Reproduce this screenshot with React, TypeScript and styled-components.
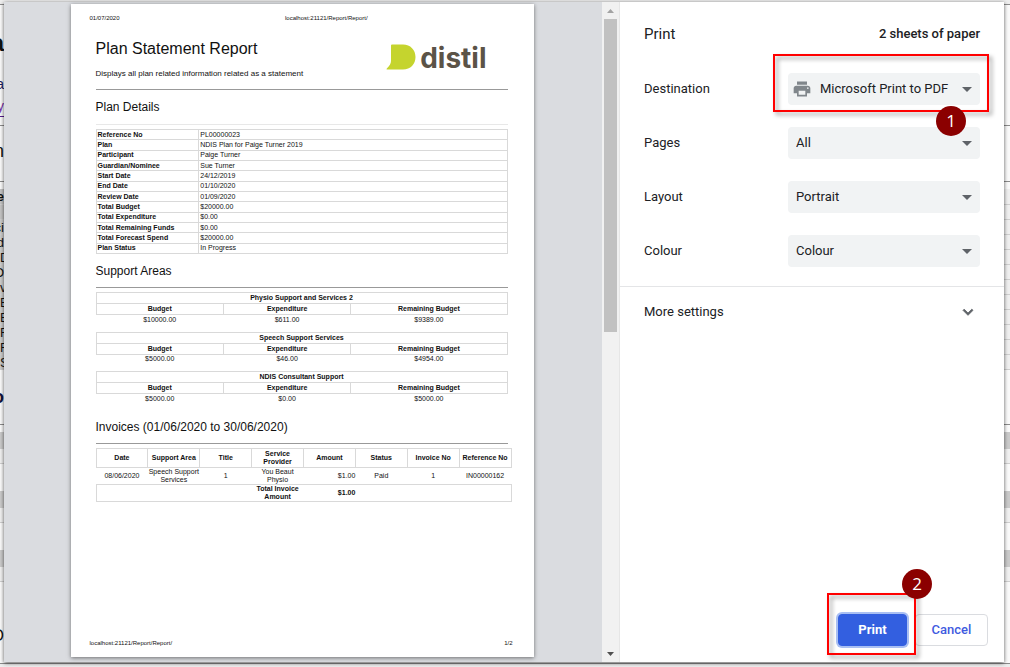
import React from 'react';
import styled, { createGlobalStyle, css } from 'styled-components';

const GlobalStyle = createGlobalStyle`
  *, *::before, *::after { box-sizing: border-box; }
  body {
    margin: 0;
    background: #fbfbfb;
    color: #202124;
    font-family: Roboto, "Liberation Sans", sans-serif;
    font-size: 13px;
  }
`;

const Stage = styled.div`
  display: grid;
  grid-template-columns: minmax(0, 1fr);
  min-height: 100vh;
`;

/* ---------- page behind the dialog ---------- */

const Backdrop = styled.div`
  grid-area: 1 / 1;
  display: flex;
  flex-direction: column;
  overflow: hidden;
  font-family: "Liberation Sans", Arial, sans-serif;
`;

const BackRow = styled.div<{ $h: number; $bg?: string; $line?: string }>`
  display: flex;
  flex: none;
  height: ${(p) => p.$h}px;
  background: ${(p) => p.$bg ?? 'transparent'};
  border-bottom: ${(p) => (p.$line ? `1px solid ${p.$line}` : 'none')};
`;

const BackCell = styled.div<{
  $size: number; $color: string; $bold?: boolean; $bg?: string; $link?: boolean; $start?: boolean;
}>`
  display: flex;
  align-items: center;
  justify-content: ${(p) => (p.$start ? 'flex-start' : 'flex-end')};
  width: 4px;
  overflow: hidden;
  background: ${(p) => p.$bg ?? 'transparent'};
  color: ${(p) => p.$color};
  font-size: ${(p) => p.$size}px;
  font-weight: ${(p) => (p.$bold ? 700 : 400)};
  border-bottom: ${(p) => (p.$link ? '1px solid #551a8b' : 'none')};
`;

type Back = {
  h: number;
  bg?: string;
  line?: string;
  text?: string;
  size?: number;
  color?: string;
  bold?: boolean;
  cell?: string;
  link?: boolean;
  start?: boolean;
};

const tableRows: Back[] = ['ci', 'd', 'D', 'O', 'v', 'E', 'E', 'F', 'F', 'S'].map((text) => ({
  h: 15,
  bg: '#f0f0f0',
  line: '#cfcfcf',
  text,
  size: 13,
  cell: '#cccccb',
  start: 'DEFSv'.includes(text),
}));

const band: Back[] = [
  { h: 17, bg: '#cbcbcb' },
  { h: 15, bg: '#f1f1f1', line: '#cfcfcf' },
];

const backRows: Back[] = [
  { h: 5, bg: '#eeeeee', line: '#8c8c8c' },
  { h: 11 },
  { h: 54, text: 'a', size: 24, bold: true },
  { h: 2 },
  { h: 24, text: 'a', size: 14, color: '#1a1a5e' },
  { h: 21, text: 'y', size: 14, color: '#7a2fa8', link: true },
  { h: 9, line: '#8c8c8c' },
  { h: 50, text: 'n', size: 18 },
  { h: 6, line: '#8c8c8c' },
  { h: 7 },
  { h: 16, bg: '#f0f0f0', line: '#cfcfcf', text: 'e', size: 13, bold: true, cell: '#c4c4c4' },
  { h: 15, bg: '#f0f0f0', line: '#cfcfcf', text: '', cell: '#c4c4c4' },
  ...tableRows,
  { h: 54, text: 'o', size: 18, bold: true, color: '#14143c' },
  { h: 1, bg: '#8c8c8c' },
  { h: 7 },
  ...band,
  { h: 27 },
  ...band,
  { h: 27 },
  ...band,
  { h: 40 },
  { h: 28, text: 'O', size: 16 },
  { h: 14, line: '#8c8c8c' },
  { h: 3, bg: '#eeeeee' },
];

/* ---------- dialog ---------- */

const Dialog = styled.main`
  grid-area: 1 / 1;
  display: flex;
  margin: 2px 6px 5px 4px;
  background: #fff;
  box-shadow: 0 1px 4px rgba(0, 0, 0, 0.65);
  z-index: 1;
`;

const Preview = styled.section`
  flex: 1;
  min-width: 0;
  display: flex;
  justify-content: center;
  padding: 2px 2px 5px 0;
  background: #dadce0;
`;

const Scrollbar = styled.div`
  display: flex;
  flex-direction: column;
  align-items: center;
  width: 18px;
  background: #f1f1f1;
  border-right: 1px solid #e6e6e6;
`;

const ScrollButton = styled.button`
  display: flex;
  align-items: center;
  justify-content: center;
  width: 17px;
  height: 17px;
  padding: 0;
  border: 0;
  background: transparent;
`;

const ScrollTrack = styled.div`
  flex: 1;
  width: 13px;
`;

const ScrollThumb = styled.div`
  height: 50%;
  background: #c1c1c1;
`;

/* ---------- report page ---------- */

const Paper = styled.article`
  display: flex;
  flex-direction: column;
  flex: 0 1 463px;
  min-width: 0;
  padding: 10px 19px;
  background: #fff;
  color: #111;
  box-shadow: 0 1px 4px rgba(0, 0, 0, 0.5);
  font-family: "Liberation Sans", Arial, sans-serif;
  font-size: 7px;
  line-height: 8px;
`;

const PageHeader = styled.header`
  display: grid;
  grid-template-columns: 46% auto;
  font-size: 6px;
`;

const PageFooter = styled.footer`
  display: flex;
  justify-content: space-between;
  margin-top: auto;
  padding-right: 2px;
  font-size: 6px;
`;

const Report = styled.div`
  padding: 15px 7px 0 6px;
`;

const Intro = styled.div`
  display: flex;
  justify-content: space-between;
  height: 53px;
  padding-top: 1px;
  border-bottom: 1px solid #999;
`;

const Title = styled.h1`
  margin: 0 0 10px;
  font-size: 16px;
  line-height: 22px;
  font-weight: 400;
`;

const Description = styled.p`
  margin: 0;
  font-size: 8px;
  line-height: 8px;
`;

const Logo = styled.div`
  display: flex;
  align-items: flex-start;
  gap: 4px;
  padding: 6px 21px 0 0;
  color: #5b5347;
  font-family: Inter, sans-serif;
  font-size: 28px;
  line-height: 28px;
  font-weight: 700;
`;

const SectionTitle = styled.h2<{ $light?: boolean; $top: number }>`
  margin: 0 0 4px;
  padding: ${(p) => p.$top}px 0 ${(p) => (p.$light ? 9 : 8)}px;
  border-bottom: 1px solid ${(p) => (p.$light ? '#e8e8e8' : '#999')};
  font-size: 12px;
  line-height: 16px;
  font-weight: 400;
`;

const tableBase = css`
  border-collapse: collapse;
  table-layout: fixed;
  th, td { padding: 0; }
  th { font-weight: 700; }
`;

const DetailsTable = styled.table`
  ${tableBase}
  width: 100%;
  height: 125px;
  text-align: left;
  th, td { border: 1px solid #d9d9d9; padding-left: 1px; }
  th { width: 25%; }
`;

const SupportTable = styled.table`
  ${tableBase}
  width: 100%;
  margin-bottom: 7px;
  text-align: center;
  th { height: 11px; border: 1px solid #d9d9d9; }
  td { height: 10px; }
`;

const InvoiceTable = styled.table`
  ${tableBase}
  width: calc(100% + 4px);
  text-align: center;
  th { height: 19px; border: 1px solid #d9d9d9; }
  td { height: 17px; }
  tfoot tr { border: 1px solid #d9d9d9; font-weight: 700; }
`;

const AmountCell = styled.td`
  text-align: right;
`;

/* ---------- settings ---------- */

const Settings = styled.aside`
  display: flex;
  flex-direction: column;
  flex: none;
  width: 384px;
`;

const SettingsHeader = styled.header`
  display: flex;
  align-items: center;
  justify-content: space-between;
  height: 64px;
  padding: 0 24px;
`;

const Heading = styled.h2`
  margin: 0;
  font-size: 15px;
  font-weight: 400;
`;

const Sheets = styled.span`
  padding-bottom: 2px;
  font-weight: 500;
`;

const Fields = styled.div`
  display: flex;
  flex-direction: column;
  gap: 22px;
  padding: 7px 24px 19px;
  border-bottom: 1px solid #e4e5e7;
`;

const Field = styled.div`
  display: flex;
  align-items: center;
  justify-content: space-between;
`;

const FieldLabel = styled.label`
  padding-bottom: 2px;
`;

const SelectBox = styled.div`
  position: relative;
  display: grid;
  align-items: center;
  width: 192px;
  > * { grid-area: 1 / 1; }
`;

const Select = styled.select<{ $icon?: boolean }>`
  width: 100%;
  height: 32px;
  padding: 0 28px 2px ${(p) => (p.$icon ? 32 : 8)}px;
  appearance: none;
  border: 0;
  border-radius: 4px;
  background: #f1f3f4;
  color: #202124;
  font: inherit;
`;

const Caret = styled.svg`
  justify-self: end;
  margin-right: 8px;
  pointer-events: none;
`;

const PrinterIcon = styled.svg`
  margin-left: 4px;
  pointer-events: none;
`;

const More = styled.button`
  display: flex;
  align-items: center;
  justify-content: space-between;
  height: 49px;
  padding: 0 26px 0 24px;
  border: 0;
  background: transparent;
  color: inherit;
  font: inherit;
`;

const Actions = styled.footer`
  display: flex;
  justify-content: flex-end;
  gap: 8px;
  margin-top: auto;
  padding: 16px;
`;

const ActionWrap = styled.div`
  position: relative;
`;

const Button = styled.button<{ $primary?: boolean }>`
  height: 32px;
  width: ${(p) => (p.$primary ? 69 : 73)}px;
  padding: 0 0 2px;
  border: 1px solid ${(p) => (p.$primary ? '#335fe0' : '#dadce0')};
  border-radius: 4px;
  background: ${(p) => (p.$primary ? '#335fe0' : '#fff')};
  box-shadow: ${(p) => (p.$primary ? '0 0 0 2px #a9bff3' : 'none')};
  color: ${(p) => (p.$primary ? '#fff' : '#3f5be0')};
  font-family: inherit;
  font-size: 13px;
  font-weight: ${(p) => (p.$primary ? 700 : 500)};
`;

/* ---------- step callouts ---------- */

const Callout = styled.div<{ $inset: string }>`
  position: absolute;
  inset: ${(p) => p.$inset};
  border: 2px solid #f00;
  filter: drop-shadow(3px 3px 2px rgba(0, 0, 0, 0.4));
  pointer-events: none;
  z-index: 1;
`;

const Step = styled.span<{ $right: number; $top: number }>`
  position: absolute;
  right: ${(p) => p.$right}px;
  top: ${(p) => p.$top}px;
  width: 30px;
  height: 30px;
  border-radius: 50%;
  background: #8b0000;
  color: #fff;
  font-family: "Open Sans", sans-serif;
  font-size: 17px;
  line-height: 29px;
  text-align: center;
  pointer-events: none;
  z-index: 2;
`;

const details = [
  ['Reference No', 'PL00000023'],
  ['Plan', 'NDIS Plan for Paige Turner 2019'],
  ['Participant', 'Paige Turner'],
  ['Guardian/Nominee', 'Sue Turner'],
  ['Start Date', '24/12/2019'],
  ['End Date', '01/10/2020'],
  ['Review Date', '01/09/2020'],
  ['Total Budget', '$20000.00'],
  ['Total Expenditure', '$0.00'],
  ['Total Remaining Funds', '$0.00'],
  ['Total Forecast Spend', '$20000.00'],
  ['Plan Status', 'In Progress'],
];

const supports = [
  { name: 'Physio Support and Services 2', values: ['$10000.00', '$611.00', '$9389.00'] },
  { name: 'Speech Support Services', values: ['$5000.00', '$46.00', '$4954.00'] },
  { name: 'NDIS Consultant Support', values: ['$5000.00', '$0.00', '$5000.00'] },
];

const invoiceColumns = [
  'Date', 'Support Area', 'Title', 'Service Provider', 'Amount', 'Status', 'Invoice No', 'Reference No',
];

function SelectField({ id, label, value, destination }: {
  id: string; label: string; value: string; destination?: boolean;
}) {
  return (
    <Field>
      <FieldLabel htmlFor={id}>{label}</FieldLabel>
      <SelectBox>
        <Select id={id} $icon={destination}>
          <option>{value}</option>
        </Select>
        {destination && (
          <PrinterIcon width="20" height="20" viewBox="0 0 24 24" fill="#80868b" aria-hidden="true">
            <path d="M19 8H5c-1.660 0-3 1.340-3 3v6h4v4h12v-4h4v-6c0-1.660-1.340-3-3-3zm-3 11H8v-5h8v5zm3-7c-.55 0-1-.45-1-1s.45-1 1-1 1 .45 1 1-.45 1-1 1zm-1-9H6v4h12V3z" />
          </PrinterIcon>
        )}
        <Caret width="10" height="5" viewBox="0 0 10 5" fill="#5f6368" aria-hidden="true">
          <path d="M0 0h10L5 5z" />
        </Caret>
        {destination && (
          <>
            <Callout $inset="-19px -9px -7px -15px" />
            <Step $right={14} $top={33}>1</Step>
          </>
        )}
      </SelectBox>
    </Field>
  );
}

export default function App() {
  return (
    <Stage>
      <GlobalStyle />
      <Backdrop aria-hidden="true">
        {backRows.map((r, i) => (
          <BackRow key={i} $h={r.h} $bg={r.bg} $line={r.line}>
            {r.text !== undefined && (
              <BackCell
                $size={r.size ?? 13}
                $color={r.color ?? '#111'}
                $bold={r.bold}
                $bg={r.cell}
                $link={r.link}
                $start={r.start}
              >
                {r.text}
              </BackCell>
            )}
          </BackRow>
        ))}
      </Backdrop>

      <Dialog>
        <Preview>
          <Paper>
            <PageHeader>
              <span>01/07/2020</span>
              <span>localhost:21121/Report/Report/</span>
            </PageHeader>
            <Report>
              <Intro>
                <div>
                  <Title>Plan Statement Report</Title>
                  <Description>Displays all plan related information related as a statement</Description>
                </div>
                <Logo>
                  <svg width="30" height="26" viewBox="0 0 30 26" fill="#c5d42e" aria-hidden="true">
                    <path d="M5 1.500Q5 .5 6 .5H17C24.500.5 29.500 6 29.500 13S24.500 25.500 17 25.500H1Q0 25.500.8 24.500Q5 20.500 5 17z" />
                  </svg>
                  <span>distil</span>
                </Logo>
              </Intro>

              <SectionTitle $top={9} $light>Plan Details</SectionTitle>
              <DetailsTable>
                <tbody>
                  {details.map(([name, value]) => (
                    <tr key={name}>
                      <th scope="row">{name}</th>
                      <td>{value}</td>
                    </tr>
                  ))}
                </tbody>
              </DetailsTable>

              <SectionTitle $top={9}>Support Areas</SectionTitle>
              {supports.map((s) => (
                <SupportTable key={s.name}>
                  <colgroup>
                    <col width="31%" />
                    <col width="31%" />
                    <col width="38%" />
                  </colgroup>
                  <thead>
                    <tr><th colSpan={3}>{s.name}</th></tr>
                    <tr><th>Budget</th><th>Expenditure</th><th>Remaining Budget</th></tr>
                  </thead>
                  <tbody>
                    <tr>{s.values.map((v, i) => <td key={i}>{v}</td>)}</tr>
                  </tbody>
                </SupportTable>
              ))}

              <SectionTitle $top={8}>Invoices (01/06/2020 to 30/06/2020)</SectionTitle>
              <InvoiceTable>
                <thead>
                  <tr>{invoiceColumns.map((c) => <th key={c}>{c}</th>)}</tr>
                </thead>
                <tbody>
                  <tr>
                    <td>08/06/2020</td>
                    <td>Speech Support Services</td>
                    <td>1</td>
                    <td>You Beaut Physio</td>
                    <AmountCell>$1.00</AmountCell>
                    <td>Paid</td>
                    <td>1</td>
                    <td>IN00000162</td>
                  </tr>
                </tbody>
                <tfoot>
                  <tr>
                    <td colSpan={3} />
                    <td>Total Invoice Amount</td>
                    <AmountCell>$1.00</AmountCell>
                    <td colSpan={3} />
                  </tr>
                </tfoot>
              </InvoiceTable>
            </Report>
            <PageFooter>
              <span>localhost:21121/Report/Report/</span>
              <span>1/2</span>
            </PageFooter>
          </Paper>
        </Preview>

        <Scrollbar>
          <ScrollButton aria-label="Scroll up">
            <svg width="7" height="4" viewBox="0 0 7 4" fill="#a3a3a3"><path d="M3.500 0L7 4H0z" /></svg>
          </ScrollButton>
          <ScrollTrack><ScrollThumb /></ScrollTrack>
          <ScrollButton aria-label="Scroll down">
            <svg width="7" height="4" viewBox="0 0 7 4" fill="#505050"><path d="M0 0h7L3.500 4z" /></svg>
          </ScrollButton>
        </Scrollbar>

        <Settings>
          <SettingsHeader>
            <Heading>Print</Heading>
            <Sheets>2 sheets of paper</Sheets>
          </SettingsHeader>
          <Fields>
            <SelectField id="destination" label="Destination" value="Microsoft Print to PDF" destination />
            <SelectField id="pages" label="Pages" value="All" />
            <SelectField id="layout" label="Layout" value="Portrait" />
            <SelectField id="colour" label="Colour" value="Colour" />
          </Fields>
          <More>
            <span>More settings</span>
            <svg width="20" height="20" viewBox="0 0 24 24" fill="#5f6368" stroke="#5f6368" aria-hidden="true">
              <path d="M7.410 8.590L12 13.170l4.590-4.580L18 10l-6 6-6-6z" />
            </svg>
          </More>
          <Actions>
            <ActionWrap>
              <Button $primary>Print</Button>
              <Callout $inset="-21px -9px -9px -11px" />
              <Step $right={-25} $top={-45}>2</Step>
            </ActionWrap>
            <Button>Cancel</Button>
          </Actions>
        </Settings>
      </Dialog>
    </Stage>
  );
}
